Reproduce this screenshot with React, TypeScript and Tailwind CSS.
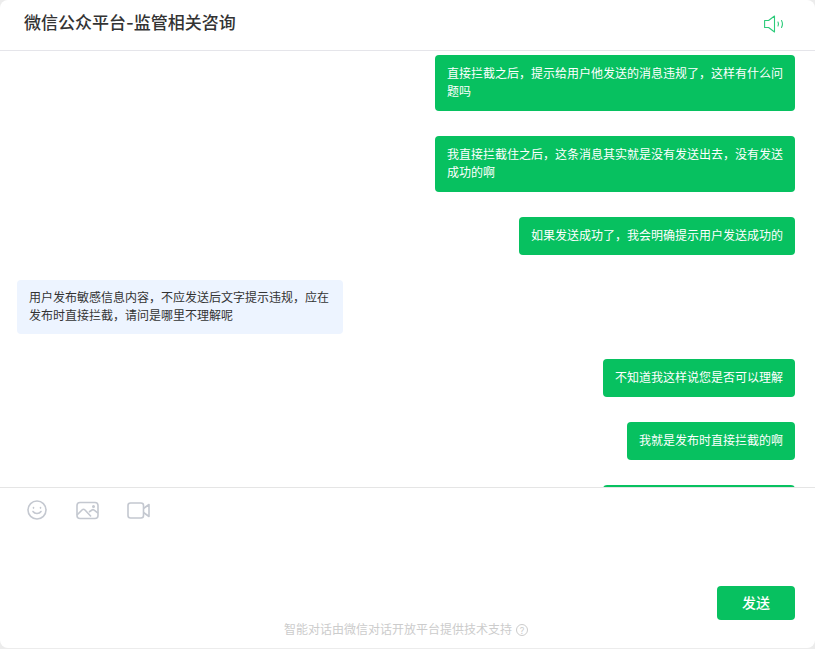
const messages = [
  { from: "me", text: "直接拦截之后，提示给用户他发送的消息违规了，这样有什么问题吗" },
  { from: "me", text: "我直接拦截住之后，这条消息其实就是没有发送出去，没有发送成功的啊" },
  { from: "me", text: "如果发送成功了，我会明确提示用户发送成功的" },
  { from: "bot", text: "用户发布敏感信息内容，不应发送后文字提示违规，应在发布时直接拦截，请问是哪里不理解呢" },
  { from: "me", text: "不知道我这样说您是否可以理解" },
  { from: "me", text: "我就是发布时直接拦截的啊" },
];

const App = () => {
  return (
    <div className="h-[649px] w-[815px] overflow-hidden bg-[#ececec] font-['Inter','Noto_Sans_CJK_SC',sans-serif]">
      <div className="flex h-[648px] flex-col overflow-hidden rounded-[8px] bg-white">
        <header className="flex h-[51px] shrink-0 items-center justify-between border-b border-[#e5e5ea] pl-6 pr-[31px]">
          <h1 className="pb-[2px] text-[17px] font-medium text-[#333]">微信公众平台-监管相关咨询</h1>
          <svg className="mb-[3px]" width="20" height="18" viewBox="0 0 20 18" fill="none" stroke="#2ccb7a" strokeWidth="1.1">
            <path d="M.6 5.500h4L10.500 1v16l-5.900-4.500H.6z" strokeLinejoin="round" />
            <path d="M14 7c.6 1.300.6 2.700 0 4" strokeLinecap="round" />
            <path d="M17.500 5.500c1.200 2.200 1.200 4.800 0 7" strokeLinecap="round" />
          </svg>
        </header>

        <div className="flex min-h-0 flex-1 flex-col gap-[25px] overflow-hidden pt-1">
          {messages.map((m, i) =>
            m.from === "me" ? (
              <div key={i} className="flex shrink-0 justify-end pr-5">
                <div className="max-w-[360px] rounded-[4px] bg-[#07c160] px-3 py-[10px] text-xs leading-[18px] text-white">
                  {m.text}
                </div>
              </div>
            ) : (
              <div key={i} className="flex shrink-0 justify-start pl-[17px]">
                <div className="w-[326px] rounded-[4px] bg-[#edf4ff] px-3 py-[9px] text-xs leading-[18px] text-[#333]">
                  {m.text}
                </div>
              </div>
            )
          )}
          {/* next bubble is scrolled out of view, only its top edge shows */}
          <div className="flex shrink-0 justify-end pr-5">
            <div className="h-[38px] w-[192px] rounded-[4px] bg-[#07c160]" />
          </div>
        </div>

        <div className="h-[161px] shrink-0 border-t border-[#e5e5e5]">
          <div className="flex items-center gap-[28px] pl-[26px] pt-[12px]">
            <svg width="22" height="20" viewBox="0 0 22 20" fill="none" stroke="#c4c8d0" strokeWidth="1.6" strokeLinecap="round">
              <circle cx="11" cy="10" r="9" />
              <path d="M7 11.500c1.800 2.600 6.200 2.600 8 0" />
              <path d="M7.500 7.500v.6M14.500 7.500v.6" />
            </svg>
            <svg width="23" height="19" viewBox="0 0 23 19" fill="none" stroke="#c4c8d0" strokeWidth="1.6" strokeLinejoin="round">
              <rect x="1" y="1.500" width="21" height="16" rx="3" />
              <path d="M1 14l5-5c1-1 2-1 3 0l6 6.500" />
              <path d="M13 11l3-2c.8-.5 1.500-.4 2.200.2l3.800 3" />
              <circle cx="17.500" cy="5.500" r=".7" />
            </svg>
            <svg width="23" height="17" viewBox="0 0 23 17" fill="none" stroke="#c4c8d0" strokeWidth="1.6" strokeLinejoin="round">
              <rect x="1" y="1" width="15.500" height="15" rx="2.500" />
              <path d="M16.500 6.500L22 2.500v12l-5.500-4" />
            </svg>
          </div>
          <div className="flex justify-end pr-5 pt-[66px]">
            <button className="h-[34px] w-[78px] rounded-[4px] bg-[#07c160] text-sm font-medium text-white">
              发送
            </button>
          </div>
          <div className="flex items-center justify-center gap-1 pr-[3px] text-xs leading-5 text-[#cccccc]">
            <span>智能对话由微信对话开放平台提供技术支持</span>
            <span className="flex h-3 w-3 items-center justify-center rounded-full border border-[#cccccc] text-[9px] leading-none">
              ?
            </span>
          </div>
        </div>
      </div>
    </div>
  );
};

export default App;
